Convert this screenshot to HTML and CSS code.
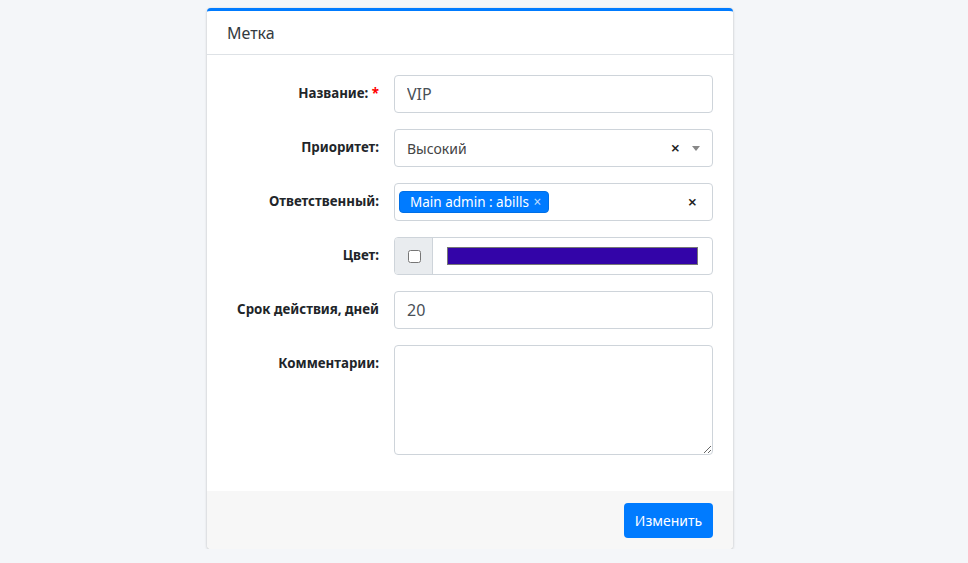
FILE: index.html
```html
<!DOCTYPE html>
<html lang="ru">
<head>
    <meta charset="UTF-8">
    <meta name="viewport" content="width=device-width, initial-scale=1.0">
    <title>Метка</title>
    <link rel="stylesheet" href="styles.css">
</head>
<body>
    <div class="card">
        <div class="card-header">Метка</div>
        <form class="card-body" id="tagForm">
            <div class="form-row">
                <label class="col-label" for="name">Название: <span class="req">*</span></label>
                <input type="text" id="name" class="form-control" value="VIP">
            </div>

            <div class="form-row">
                <label class="col-label">Приоритет:</label>
                <div class="select2">
                    <span class="select2-text">Высокий</span>
                    <span class="select2-clear">&times;</span>
                    <span class="select2-arrow"></span>
                </div>
            </div>

            <div class="form-row">
                <label class="col-label">Ответственный:</label>
                <div class="select2 multi">
                    <span class="tag">Main admin : abills <span class="tag-x">&times;</span></span>
                    <span class="select2-clear">&times;</span>
                </div>
            </div>

            <div class="form-row">
                <label class="col-label">Цвет:</label>
                <div class="input-group">
                    <div class="input-prepend">
                        <input type="checkbox" class="check">
                    </div>
                    <div class="color-field">
                        <div class="swatch"></div>
                    </div>
                </div>
            </div>

            <div class="form-row">
                <label class="col-label" for="days">Срок действия, дней</label>
                <input type="text" id="days" class="form-control" value="20">
            </div>

            <div class="form-row">
                <label class="col-label" for="comments">Комментарии:</label>
                <textarea id="comments" class="form-control textarea"></textarea>
            </div>
        </form>
        <div class="card-footer">
            <button type="submit" form="tagForm" class="btn">Изменить</button>
        </div>
    </div>
</body>
</html>
```

FILE: styles.css
```css
body {
    margin: 0;
    padding: 8px 0 0;
    background-color: #f4f6f9;
    font-family: "Noto Sans", "Open Sans", sans-serif;
    font-size: 14px;
    color: #212529;
}
.card {
    width: 526px;
    margin-left: 207px;
    background-color: white;
    border-top: 3px solid #007bff;
    border-radius: 4px;
    box-shadow: 0 0 1px rgba(0,0,0,0.125), 0 1px 3px rgba(0,0,0,0.2);
    box-sizing: border-box;
}
.card-header {
    height: 43px;
    padding: 0 20px;
    display: flex;
    align-items: center;
    font-size: 16px;
    color: #343a40;
    border-bottom: 1px solid #dee2e6;
}
.card-body {
    padding: 20px 20px 20px;
}
.form-row {
    display: grid;
    grid-template-columns: 152px 319px;
    column-gap: 15px;
    margin-bottom: 16px;
}
.col-label {
    text-align: right;
    font-weight: bold;
    font-size: 13.3px;
    padding-top: 8px;
    line-height: 20px;
}
.req {
    color: red;
}
.form-control {
    height: 38px;
    box-sizing: border-box;
    border: 1px solid #ced4da;
    border-radius: 4px;
    padding: 6px 12px;
    font-family: inherit;
    font-size: 16px;
    color: #495057;
    background: white;
    width: 100%;
    margin: 0;
}
.textarea {
    height: 110px;
    resize: vertical;
}
.select2 {
    height: 38px;
    box-sizing: border-box;
    border: 1px solid #ced4da;
    border-radius: 4px;
    display: flex;
    align-items: center;
    padding: 0 12px;
    color: #444;
}
.select2-text {
    flex: 1;
}
.select2-clear {
    font-weight: 600;
    font-size: 16px;
    color: #222;
    margin-right: 12px;
}
.select2-arrow {
    width: 0;
    height: 0;
    border-left: 4px solid transparent;
    border-right: 4px solid transparent;
    border-top: 5px solid #888;
}
.multi {
    padding: 0 15px 0 4px;
    justify-content: space-between;
}
.multi .select2-clear {
    margin-right: 0;
}
.tag {
    background-color: #007bff;
    color: white;
    border: 1px solid #006fe6;
    border-radius: 4px;
    padding: 0 7px 0 10px;
    height: 22px;
    line-height: 21px;
    font-size: 13.5px;
    box-sizing: border-box;
}
.tag-x {
    color: rgba(255,255,255,0.75);
    margin-left: 1px;
}
.input-group {
    display: flex;
    height: 38px;
    border: 1px solid #ced4da;
    border-radius: 4px;
    box-sizing: border-box;
    overflow: hidden;
}
.input-prepend {
    width: 37px;
    background-color: #e9ecef;
    border-right: 1px solid #ced4da;
    display: flex;
    align-items: center;
    justify-content: center;
}
.check {
    width: 13px;
    height: 13px;
    margin: 0 0 0 1px;
}
.color-field {
    flex: 1;
    display: flex;
    align-items: center;
    padding: 0 14px;
}
.swatch {
    flex: 1;
    height: 16px;
    background-color: #3304a8;
    border: 1px solid #767676;
}
.card-footer {
    background-color: #f7f7f7;
    padding: 12px 20px 11px;
    display: flex;
    justify-content: flex-end;
    border-radius: 0 0 4px 4px;
}
.btn {
    background-color: #007bff;
    color: white;
    border: none;
    border-radius: 4px;
    height: 35px;
    width: 89px;
    padding: 0;
    font-family: inherit;
    font-size: 14px;
    cursor: pointer;
}
.btn:hover {
    background-color: #0069d9;
}
```
